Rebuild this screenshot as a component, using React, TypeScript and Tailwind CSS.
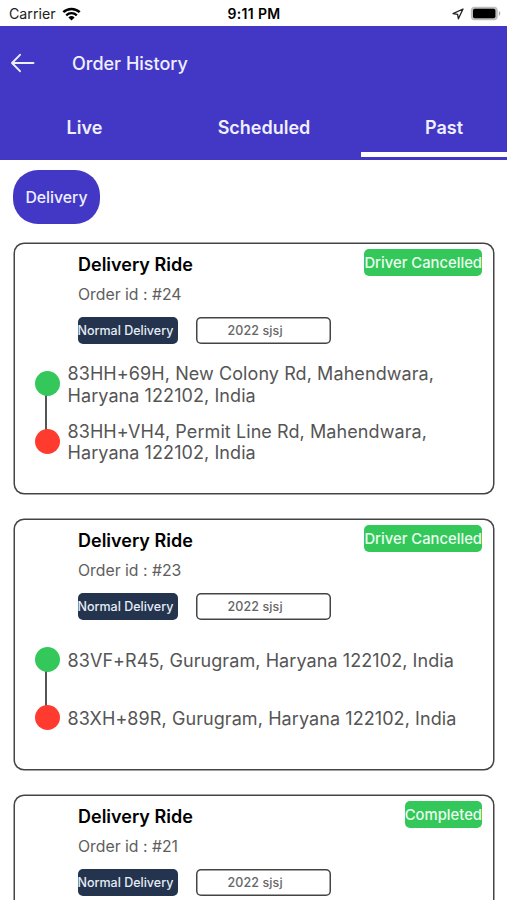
type Order = {
  id: number;
  status: string;
  pickup: string[];
  drop: string[];
};

const orders: Order[] = [
  {
    id: 24,
    status: "Driver Cancelled",
    pickup: ["83HH+69H, New Colony Rd, Mahendwara,", "Haryana 122102, India"],
    drop: ["83HH+VH4, Permit Line Rd, Mahendwara,", "Haryana 122102, India"],
  },
  {
    id: 23,
    status: "Driver Cancelled",
    pickup: ["83VF+R45, Gurugram, Haryana 122102, India"],
    drop: ["83XH+89R, Gurugram, Haryana 122102, India"],
  },
  {
    id: 21,
    status: "Completed",
    pickup: [],
    drop: [],
  },
];

function StatusBar() {
  return (
    <div className="grid h-[25.5px] grid-cols-3 items-center pt-[2px] pl-[9px] pr-[8px] text-black">
      <div className="flex items-center gap-[6px]">
        <span className="text-[14.2px] text-[#222]">Carrier</span>
        <svg width="19" height="14" viewBox="0 0 19 14" fill="none">
          <path d="M1.3 5.2a12 12 0 0 1 16.4 0" stroke="#000" strokeWidth="2.5" />
          <path d="M4.2 8.3a7.7 7.7 0 0 1 10.6 0" stroke="#000" strokeWidth="2.3" />
          <path d="M9.5 13.6 6.4 10.5a4.5 4.5 0 0 1 6.2 0Z" fill="#000" />
        </svg>
      </div>
      <span className="text-center text-[14px] font-semibold tracking-[0.35px] whitespace-nowrap">
        9:11 PM
      </span>
      <div className="flex items-center justify-end gap-[6px]">
        <svg width="12" height="12" viewBox="0 0 12 12" fill="none">
          <path
            d="M11 1 1 5.6 5.6 6.3 6.4 10.8Z"
            stroke="#222"
            strokeWidth="1.3"
            strokeLinejoin="round"
          />
        </svg>
        <svg className="-mr-[2px]" width="31" height="15" viewBox="0 0 31 15">
          <rect x="0.8" y="0.7" width="27" height="13.6" rx="3.8" fill="#bdbdbd" />
          <path d="M28.8 5.1c2 .8 2 4 0 4.8Z" fill="#aaa" />
          <rect x="3" y="2.8" width="22.4" height="9.4" rx="1.8" fill="#000" />
        </svg>
      </div>
    </div>
  );
}

function Header() {
  return (
    <header className="h-[134px] bg-[#4338c6] text-[#f0efff]">
      <div className="flex h-[74px] items-center pl-[11px]">
        <svg width="24" height="20" viewBox="0 0 24 20" fill="none">
          <path
            d="M22.5 10H1M9 1.8 1 10l8 8.2"
            stroke="#eeeeff"
            strokeWidth="1.9"
            strokeLinecap="round"
            strokeLinejoin="round"
          />
        </svg>
        <h1 className="ml-[37px] pt-[1px] text-[18px] font-medium">Order History</h1>
      </div>
      <nav className="flex h-[57.5px] text-[18px] font-semibold">
        <div className="flex w-[169px] justify-center pt-[14px]">Live</div>
        <div className="flex w-[190px] justify-center pt-[14px]">Scheduled</div>
        <div className="ml-[2px] flex flex-1 justify-center border-b-[5px] border-white pt-[14px] pl-[20px]">
          Past
        </div>
      </nav>
    </header>
  );
}

function Stop({ lines, color }: { lines: string[]; color: string }) {
  return (
    <div className="flex h-[57.5px] items-center">
      <span className={`relative h-[25px] w-[25px] rounded-full ${color}`} />
      <p className="ml-[7.5px] pt-[2px] text-[18px] leading-[21.5px] tracking-[0.08px] whitespace-nowrap text-[#555]">
        {lines.map((line) => (
          <span key={line} className="block">
            {line}
          </span>
        ))}
      </p>
    </div>
  );
}

function OrderCard({ order }: { order: Order }) {
  return (
    <article className="h-[249px] shrink-0 rounded-[9px] bg-white shadow-[0_0_0_1.5px_#444]">
      <div className="flex justify-between pl-[63.5px] pr-[10.5px]">
        <div className="pt-[9px]">
          <h2 className="text-[18px] leading-[24px] font-semibold text-black">Delivery Ride</h2>
          <p className="mt-[6px] text-[15.8px] leading-[24px] text-[#5e5e5e]">
            Order id : #{order.id}
          </p>
        </div>
        <div className="mt-[5px] flex h-[27px] items-center rounded-[5px] bg-[#34c759] pt-[1px] text-[14.8px] font-medium whitespace-nowrap text-[#eafff0]">
          {order.status}
        </div>
      </div>
      <div className="mt-[10px] flex gap-[18px] pl-[63px] text-[12.5px]">
        <div className="flex h-[27px] w-[100px] items-center rounded-[5px] bg-[#24344f] pt-[1px] font-medium whitespace-nowrap text-[#e6edf5]">
          Normal Delivery
        </div>
        <div className="flex h-[27px] w-[135px] items-center rounded-[5px] pt-[2px] pl-[32px] font-medium tracking-[0.1px] text-[#666] inset-shadow-[0_0_0_1.5px_#444]">
          2022 sjsj
        </div>
      </div>
      <div className="relative mt-[11px] pl-[20.5px]">
        <span className="absolute top-[36px] left-[30.5px] h-[44px] w-[2px] bg-[#555]" />
        <Stop lines={order.pickup} color="bg-[#34c759]" />
        <Stop lines={order.drop} color="bg-[#ff3b30]" />
      </div>
    </article>
  );
}

export default function App() {
  return (
    <div className="h-[900px] w-[507px] overflow-hidden bg-white font-['Inter',sans-serif]">
      <StatusBar />
      <Header />
      <main className="px-[13px] pt-[10.5px]">
        <button className="flex h-[54px] w-[87px] items-center justify-center rounded-[25px] bg-[#4338c6] pt-[1px] text-[15.8px] font-medium text-[#f0efff]">
          Delivery
        </button>
        <div className="mt-[20px] flex flex-col gap-[27px] px-[1.5px]">
          {orders.map((order) => (
            <OrderCard key={order.id} order={order} />
          ))}
        </div>
      </main>
    </div>
  );
}
